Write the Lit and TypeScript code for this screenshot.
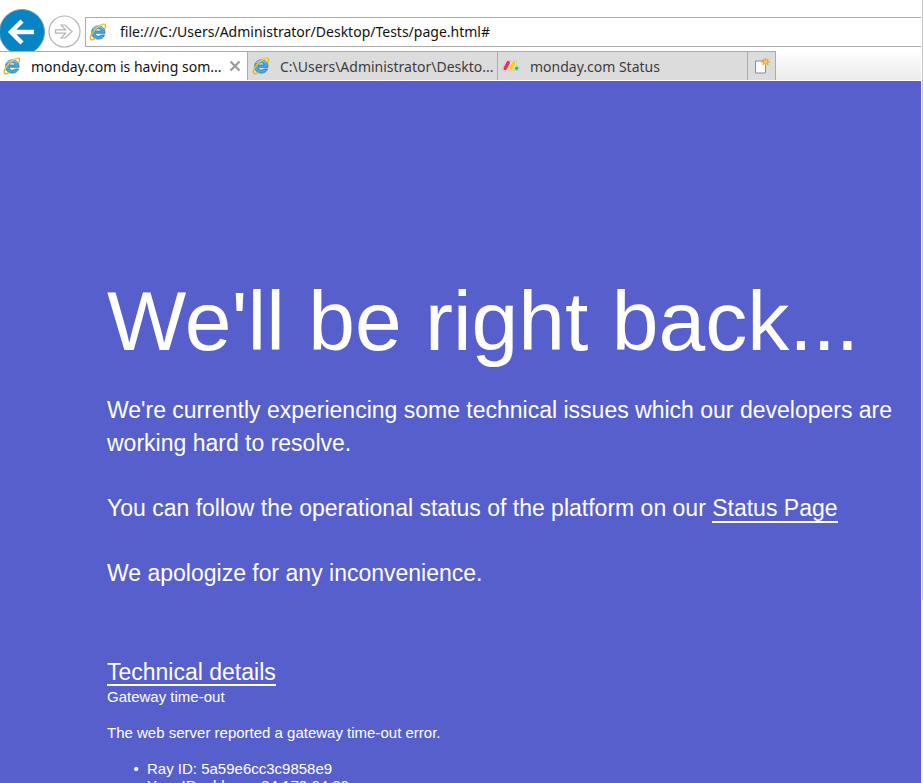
import { LitElement, html, css, svg } from "lit";
import { customElement, property } from "lit/decorators.js";

const ieLogo = html`<svg class="ico" viewBox="0 0 18 18" aria-hidden="true">
  ${svg`
    <path d="M16 10.300H6.300c.1 1.900 1.300 2.900 3 2.900 1.300 0 2.100-.4 2.600-1.200H15.600c-.9 2.500-3.100 4.100-6.300 4.100-4 0-6.700-2.500-6.700-6.500 0-4 2.700-6.700 6.700-6.700 4.300 0 6.900 2.900 6.700 7.400zM6.400 8h5.700c-.2-1.500-1.200-2.300-2.800-2.300-1.600 0-2.700.8-2.900 2.300z" fill="#46a8e0" stroke="#2479b8" stroke-width="0.800"/>
    <path d="M4 6.200c1.100-1.700 2.900-2.500 5.200-2.500 2.200 0 4 .8 5 2.500" fill="none" stroke="#8fd8f6" stroke-width="0.900"/>
    <path d="M16 5.300c.8-2 .7-3.300-.3-3.800C13.300.4 8.100 3.700 4.700 8 1.400 12.200.4 15.700 2 16.500c.8.400 2.200.1 3.800-.9" fill="none" stroke="#efb81c" stroke-width="1.500" stroke-linecap="round"/>
    <path d="M15.400 1.700C13 .9 8.300 4 5.100 8" fill="none" stroke="#ffe680" stroke-width="0.600"/>`}
</svg>`;

const mondayLogo = html`<svg class="ico" viewBox="0 0 18 18" aria-hidden="true">
  ${svg`
    <g stroke-linecap="round" fill="none">
      <path d="M3.200 11.400 6.200 5.600M9 11.400l3-5.800M14.600 11.200v.1" stroke="#b8b8b8" stroke-width="5.600"/>
      <path d="M3.200 11.400 6.200 5.600M9 11.400l3-5.800M14.600 11.200v.1" stroke="#f8f8f8" stroke-width="4.600"/>
      <path d="M3.200 11.400 6.200 5.600" stroke="#f62b54" stroke-width="3.400"/>
      <path d="M9 11.400l3-5.800" stroke="#ffcc00" stroke-width="3.400"/>
      <path d="M14.600 11.200v.1" stroke="#00ca72" stroke-width="3.400"/>
    </g>`}
</svg>`;

@customElement("browser-tab")
export class BrowserTab extends LitElement {
  @property() label = "";
  @property() icon = "ie";
  @property({ type: Boolean, reflect: true }) active = false;

  static styles = css`
    :host {
      display: flex;
      flex: 0 1 250px;
      min-width: 0;
      box-sizing: border-box;
      align-items: center;
      border-top: 1px solid #acacac;
      border-left: 1px solid #acacac;
      background: #dcdcdc;
      color: #3c3c3c;
    }
    :host([active]) {
      flex-basis: 247px;
      border-left: 0;
      background: #fff;
      color: #111;
    }
    .pick {
      display: flex;
      flex: 1;
      min-width: 0;
      height: 100%;
      align-items: center;
      gap: 10px;
      padding: 0 0 0 4px;
      border: 0;
      background: none;
      color: inherit;
      font: 14px "Noto Sans", "Open Sans", sans-serif;
      text-align: left;
    }
    :host([active]) .pick {
      padding: 0 0 0 3px;
    }
    .ico {
      flex: none;
      width: 18px;
      height: 18px;
    }
    .label {
      white-space: nowrap;
    }
    .close {
      flex: none;
      display: flex;
      padding: 6px;
      border: 0;
      background: none;
    }
    .x {
      width: 12px;
      height: 12px;
    }
  `;

  render() {
    return html`
      <button class="pick" role="tab" aria-selected=${this.active ? "true" : "false"}>
        ${this.icon === "ie" ? ieLogo : mondayLogo}
        <span class="label">${this.label}</span>
      </button>
      ${this.active
        ? html`<button class="close" aria-label="Close tab">
            <svg class="x" viewBox="0 0 12 12"><path d="M1.500 1.500l9 9M10.500 1.500l-9 9" stroke="#9b9b9b" stroke-width="2.200"/></svg>
          </button>`
        : null}
    `;
  }
}

@customElement("app-root")
export class AppRoot extends LitElement {
  static styles = css`
    :host {
      display: flex;
      height: 100vh;
      overflow: hidden;
      background: #fff;
      font-family: "Liberation Sans", Arial, sans-serif;
    }
    .window {
      display: flex;
      flex: 1;
      min-width: 0;
      flex-direction: column;
    }
    .track {
      flex: none;
      width: 1px;
      margin-left: 1px;
      background: #f0f0f0;
    }
    .thumb {
      height: 600px;
      background: #c8c8c8;
    }
    .nav {
      display: flex;
      flex: none;
      height: 51px;
      align-items: center;
      padding-top: 12px;
      box-sizing: border-box;
      overflow: hidden;
    }
    .back,
    .forward {
      flex: none;
      display: flex;
      padding: 0;
      border: 0;
      background: none;
    }
    .back svg {
      width: 45px;
      height: 46px;
    }
    .forward {
      margin: 0 4px 0 3px;
    }
    .forward svg {
      width: 33px;
      height: 33px;
    }
    .address {
      display: flex;
      flex: 1;
      min-width: 0;
      height: 30px;
      box-sizing: border-box;
      align-items: center;
      gap: 13px;
      padding-left: 3px;
      border: 1px solid #acacac;
      border-right: 0;
      background: #fff;
    }
    .address .ico {
      flex: none;
      width: 18px;
      height: 18px;
    }
    .url {
      flex: 1;
      min-width: 0;
      padding: 0;
      border: 0;
      outline: 0;
      background: none;
      color: #111;
      font: 14px "Noto Sans", "Open Sans", sans-serif;
    }
    .tabs {
      display: flex;
      flex: none;
      height: 30px;
      box-sizing: border-box;
      border-bottom: 1px solid #fff;
      background: linear-gradient(#fff, #ebebeb);
    }
    .new {
      flex: none;
      display: flex;
      width: 29px;
      align-items: center;
      justify-content: center;
      padding: 0;
      border: 1px solid #acacac;
      border-bottom: 0;
      background: #dcdcdc;
    }
    .new svg {
      width: 16px;
      height: 18px;
    }
    .page {
      flex: 1;
      min-height: 0;
      overflow: hidden;
      box-sizing: border-box;
      padding: 192px 16px 0 107px;
      background: #575fcc;
      color: #fff;
    }
    h1 {
      margin: 0 0 25px;
      font-size: 84px;
      line-height: 96px;
      font-weight: 400;
    }
    .lead {
      margin: 0 0 32px;
      font-size: 23px;
      line-height: 33px;
    }
    .link {
      color: inherit;
      text-decoration: none;
      border-bottom: 2px solid #fff;
    }
    .details {
      display: inline-block;
      margin: 38px 0 2px;
      font-size: 23px;
      line-height: 24px;
    }
    .small {
      margin: 0 0 18px;
      font-size: 15px;
      line-height: 18px;
    }
    .facts {
      margin: 0;
      padding-left: 40px;
      font-size: 15px;
      line-height: 17px;
      list-style-type: "•\\00a0\\00a0";
    }
  `;

  render() {
    return html`
      <div class="window">
        <div class="nav">
          <button class="back" aria-label="Back">
            <svg viewBox="0 0 45 46">
              <circle cx="22" cy="23" r="22.500" fill="#0784c3" stroke="#7d9cae" stroke-width="1"/>
              <path d="M34 23H12M22 12 11 23l11 11" fill="none" stroke="#fff" stroke-width="4.500"/>
            </svg>
          </button>
          <button class="forward" aria-label="Forward">
            <svg viewBox="0 0 33 33">
              <circle cx="16.500" cy="16.500" r="15.500" fill="#fff" stroke="#b4b4b4" stroke-width="1.200"/>
              <path d="M7.500 14.800v3.400h10l-4.300 4.800h3.800l7-6.500-7-6.500h-3.800l4.300 4.800z" fill="#fff" stroke="#b4b4b4" stroke-width="1.200"/>
            </svg>
          </button>
          <div class="address">
            ${ieLogo}
            <input class="url" aria-label="Address" spellcheck="false" .value=${"file:///C:/Users/Administrator/Desktop/Tests/page.html#"} />
          </div>
        </div>
        <div class="tabs" role="tablist">
          <browser-tab active label="monday.com is having som..."></browser-tab>
          <browser-tab label="C:\\Users\\Administrator\\Deskto..."></browser-tab>
          <browser-tab icon="monday" label="monday.com Status"></browser-tab>
          <button class="new" aria-label="New tab">
            <svg viewBox="0 0 16 18">
              <path d="M1.500 4h10v12h-10z" fill="#fafafa" stroke="#8c8c8c"/>
              <path d="M11.500 1v8M7.500 5h8M8.700 2.200l5.600 5.600M14.300 2.200 8.700 7.800" stroke="#eda21f" stroke-width="1.300"/>
              <circle cx="11.500" cy="5" r="1.700" fill="#ffc94d"/>
            </svg>
          </button>
        </div>
        <main class="page">
          <h1>We'll be right back...</h1>
          <p class="lead">We're currently experiencing some technical issues which our developers are working hard to resolve.</p>
          <p class="lead">You can follow the operational status of the platform on our <a class="link" href="#">Status Page</a></p>
          <p class="lead">We apologize for any inconvenience.</p>
          <a class="link details" href="#">Technical details</a>
          <p class="small">Gateway time-out</p>
          <p class="small">The web server reported a gateway time-out error.</p>
          <ul class="facts">
            <li>Ray ID: 5a59e6cc3c9858e9</li>
            <li>Your IP address: 34.170.64.80</li>
          </ul>
        </main>
      </div>
      <div class="track"><div class="thumb"></div></div>
    `;
  }
}
